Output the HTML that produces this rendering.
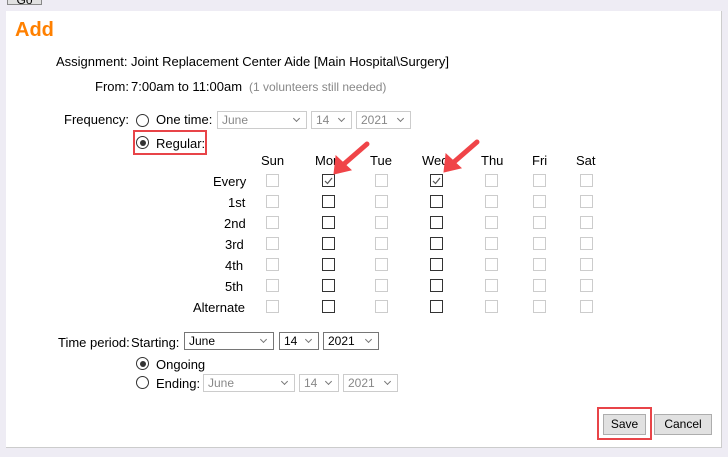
<!DOCTYPE html>
<html><head><style>
body{margin:0;width:728px;height:457px;background:#eeecf4;font-family:"Liberation Sans",Arial,sans-serif;font-size:13px;color:#000;position:relative;overflow:hidden}
.a{position:absolute;white-space:nowrap}
.panel{position:absolute;left:6px;top:11px;width:715px;height:436px;background:#fff;border-right:1px solid #ccc;border-bottom:1px solid #ccc}
.cb{position:absolute;width:11px;height:11px;border:1px solid #ccc;background:#fff}
.cb.on{border-color:#333}
.sel{position:absolute;height:18px;border:1px solid #767676;background:#fff;box-sizing:border-box;font-size:12px;padding:2px 4px;line-height:13px}
.sel.dis{border-color:#ccc;color:#888}
.sel:after{content:"";position:absolute;right:7px;top:4px;width:4px;height:4px;border-right:1px solid #777;border-bottom:1px solid #777;transform:rotate(45deg)}
.rad{position:absolute;width:11px;height:11px;border:1px solid #333;border-radius:50%;background:#fff}
.rad.on:after{content:"";position:absolute;left:2.5px;top:2.5px;width:6px;height:6px;border-radius:50%;background:#333}
.btn{position:absolute;height:20px;border:1px solid #adadad;background:#e1e1e1;box-sizing:border-box;font-size:12px;text-align:center;line-height:18px}
.red{position:absolute;border:2px solid #e84448;box-sizing:border-box}
</style></head><body>
<div class="btn" style="left:7px;top:-14px;width:35px;height:19px;border-color:#888;line-height:26px">Go</div>
<div class="panel"></div>
<div class="a" style="left:15px;top:19px;font-size:20px;font-weight:bold;color:#ff8000">Add</div>
<div class="a" style="left:56px;top:54px">Assignment:</div>
<div class="a" style="left:131px;top:54px">Joint Replacement Center Aide [Main Hospital\Surgery]</div>
<div class="a" style="left:95px;top:79px">From:</div>
<div class="a" style="left:131px;top:79px">7:00am to 11:00am <span style="color:#888;font-size:12px">&nbsp;(1 volunteers still needed)</span></div>
<div class="a" style="left:64px;top:112px">Frequency:</div>
<div class="rad" style="left:136px;top:114px"></div>
<div class="a" style="left:156px;top:112px">One time:</div>
<div class="sel dis" style="left:217px;top:111px;width:90px">June</div>
<div class="sel dis" style="left:311px;top:111px;width:41px">14</div>
<div class="sel dis" style="left:356px;top:111px;width:55px">2021</div>
<div class="red" style="left:133px;top:130px;width:74px;height:25px"></div>
<div class="rad on" style="left:136px;top:136px"></div>
<div class="a" style="left:156px;top:136px">Regular:</div>
<div class="a" style="left:261px;top:153px">Sun</div>
<div class="a" style="left:315px;top:153px">Mon</div>
<div class="a" style="left:370px;top:153px">Tue</div>
<div class="a" style="left:422px;top:153px">Wed</div>
<div class="a" style="left:481px;top:153px">Thu</div>
<div class="a" style="left:532px;top:153px">Fri</div>
<div class="a" style="left:576px;top:153px">Sat</div>
<div class="a" style="left:213px;top:174px">Every</div>
<div class="a" style="left:228px;top:195px">1st</div>
<div class="a" style="left:224px;top:216px">2nd</div>
<div class="a" style="left:225px;top:237px">3rd</div>
<div class="a" style="left:225px;top:258px">4th</div>
<div class="a" style="left:225px;top:279px">5th</div>
<div class="a" style="left:193px;top:300px">Alternate</div>
<div id="grid"></div>
<script>
var xs=[266,322,375,430,485,533,580],g='';
for(var r=0;r<7;r++){for(var c=0;c<7;c++){var on=(c==1||c==3);var y=174+r*21;
g+='<div class="cb'+(on?' on':'')+'" style="left:'+xs[c]+'px;top:'+y+'px">'+(on&&r==0?'<svg width="11" height="11" style="position:absolute;left:0;top:0"><path d="M2 6 L4.5 8.5 L9 3" stroke="#555" stroke-width="1.2" fill="none"/></svg>':'')+'</div>';}}
document.getElementById('grid').innerHTML=g;
</script>
<svg class="a" style="left:0;top:0" width="728" height="457">
<g stroke="#f04448" stroke-width="5" stroke-linecap="round" fill="#f04448">
<line x1="367" y1="144" x2="344" y2="164"/>
<polygon points="334,174 336,156 351,170" stroke-width="1"/>
<line x1="477" y1="142" x2="454" y2="162"/>
<polygon points="444,172 446,154 461,168" stroke-width="1"/>
</g></svg>
<div class="a" style="left:58px;top:335px">Time period:</div>
<div class="a" style="left:131px;top:335px">Starting:</div>
<div class="sel" style="left:184px;top:332px;width:90px">June</div>
<div class="sel" style="left:279px;top:332px;width:40px">14</div>
<div class="sel" style="left:323px;top:332px;width:56px">2021</div>
<div class="rad on" style="left:136px;top:357px"></div>
<div class="a" style="left:156px;top:357px">Ongoing</div>
<div class="rad" style="left:136px;top:376px"></div>
<div class="a" style="left:156px;top:376px">Ending:</div>
<div class="sel dis" style="left:203px;top:374px;width:92px">June</div>
<div class="sel dis" style="left:299px;top:374px;width:40px">14</div>
<div class="sel dis" style="left:343px;top:374px;width:55px">2021</div>
<div class="red" style="left:597px;top:407px;width:55px;height:33px"></div>
<div class="btn" style="left:603px;top:414px;width:43px;height:21px">Save</div>
<div class="btn" style="left:654px;top:414px;width:58px;height:21px">Cancel</div>
</body></html>
